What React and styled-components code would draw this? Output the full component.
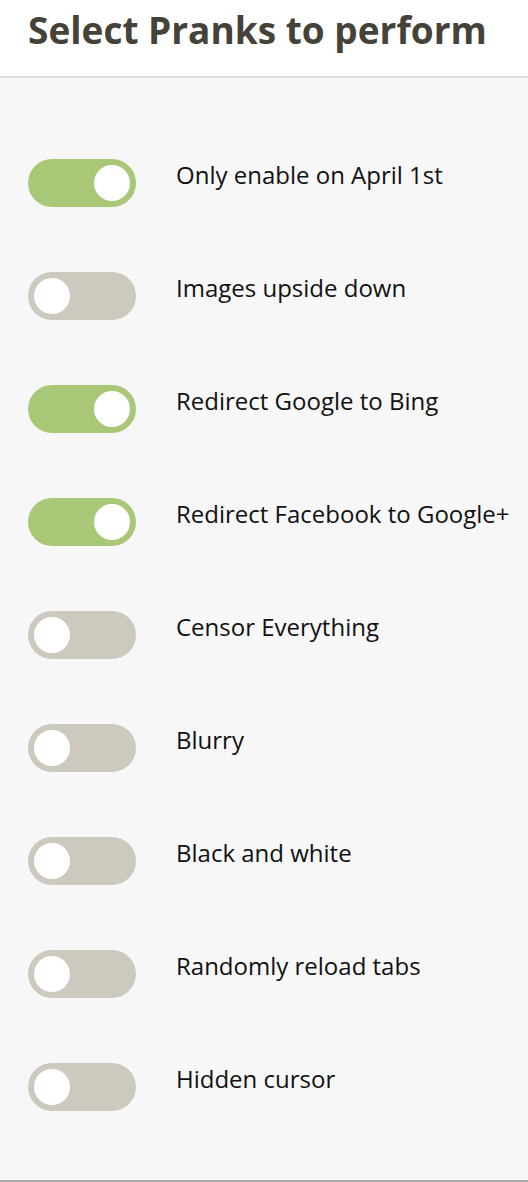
import styled, { createGlobalStyle } from 'styled-components'

const Global = createGlobalStyle`
  body {
    margin: 0;
    background: #f7f7f7;
    font-family: "Open Sans", "Liberation Sans", sans-serif;
  }
`;

const Page = styled.div`
  width: 528px;
  min-height: 1182px;
  display: flex;
  flex-direction: column;
`;

const Header = styled.header`
  background: #fff;
  height: 76px;
  border-bottom: 2px solid #dedede;
  display: flex;
  align-items: center;
  padding-left: 28px;
`;

const Title = styled.h1`
  margin: 0;
  font-size: 37px;
  font-weight: 700;
  color: #45423a;
  line-height: 1;
  margin-top: -18px;
`;

const List = styled.div`
  flex: 1;
  display: flex;
  flex-direction: column;
  gap: 65px;
  padding: 81px 0 69px 28px;
  border-bottom: 2px solid #aaa;
`;

const Row = styled.label`
  display: flex;
  align-items: flex-start;
  gap: 40px;
`;

const Track = styled.span`
  width: 108px;
  height: 48px;
  border-radius: 24px;
  background: ${(p) => (p.on ? '#a8c878' : '#cdc9bf')};
  display: flex;
  align-items: center;
  justify-content: ${(p) => (p.on ? 'flex-end' : 'flex-start')};
  padding: 0 6px;
  box-sizing: border-box;
  flex-shrink: 0;
`;

const Knob = styled.span`
  width: 36px;
  height: 36px;
  border-radius: 50%;
  background: #fff;
`;

const Label = styled.span`
  font-size: 24px;
  color: #111;
  line-height: 32px;
`;

const pranks = [
  ['Only enable on April 1st', true],
  ['Images upside down', false],
  ['Redirect Google to Bing', true],
  ['Redirect Facebook to Google+', true],
  ['Censor Everything', false],
  ['Blurry', false],
  ['Black and white', false],
  ['Randomly reload tabs', false],
  ['Hidden cursor', false],
];

const App = () => {
  return (
    <Page>
      <Global />
      <Header>
        <Title>Select Pranks to perform</Title>
      </Header>
      <List>
        {pranks.map(([name, on]) => (
          <Row key={name}>
            <Track on={on}>
              <Knob />
            </Track>
            <Label>{name}</Label>
          </Row>
        ))}
      </List>
    </Page>
  );
}

export default App;
